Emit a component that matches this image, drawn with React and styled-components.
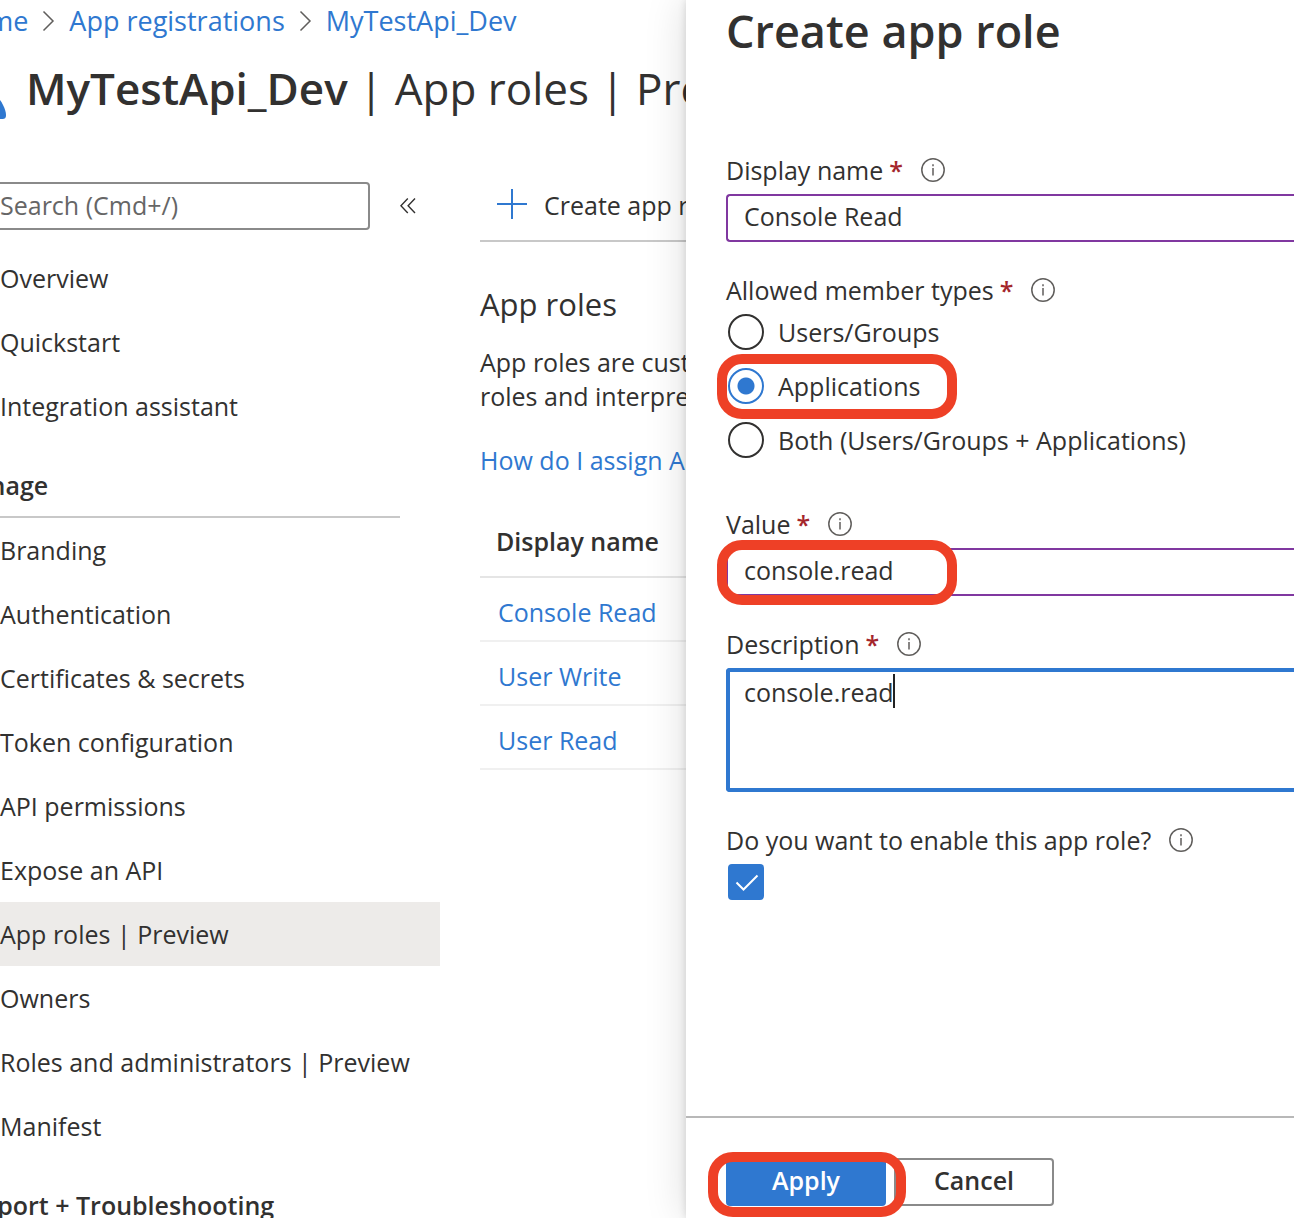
import React from "react";
import styled, { createGlobalStyle, css } from "styled-components";

const color = {
  text: "#323130",
  blue: "#2f78d0",
  purple: "#8038a0",
  red: "#ee4026",
  required: "#a4262c",
  line: "#c8c8c8",
  border: "#8a8a8a",
};

const GlobalStyle = createGlobalStyle`
  *, *::before, *::after { box-sizing: border-box; }
  body {
    margin: 0;
    background: #fff;
    color: ${color.text};
    font-family: "Open Sans", "Noto Sans", sans-serif;
    font-size: 25px;
    line-height: 34px;
  }
  input, textarea, button { font: inherit; color: inherit; }
  h1, h2, h3, p, ul { margin: 0; padding: 0; }
  ul { list-style: none; }
`;

const Shell = styled.div`
  display: grid;
  grid-template-columns: minmax(0, 1fr) 608px;
  height: 100vh;
  overflow: hidden;
`;

const Portal = styled.div`
  min-width: 0;
  overflow: hidden;
  white-space: nowrap;
`;

/* The portal is scrolled sideways by the width of its icon gutter. */
const Scrolled = styled.div`
  margin-left: -48px;
`;

const Link = styled.a`
  color: ${color.blue};
  text-decoration: none;
`;

const Breadcrumb = styled.nav`
  display: flex;
  align-items: center;
  gap: 14px;
  height: 42px;
  font-size: 27px;
  svg { flex: none; }
`;

const TitleBar = styled.header`
  display: flex;
  align-items: center;
  gap: 18px;
  height: 92px;
  margin-bottom: 36px;
  svg { flex: none; }
`;

const PageTitle = styled.h1`
  font-size: 44px;
  line-height: 64px;
  font-weight: 400;
  strong { font-weight: 600; }
`;

const Columns = styled.div`
  display: flex;
`;

const Sidebar = styled.nav`
  flex: 0 0 488px;
`;

const SearchRow = styled.div`
  display: flex;
  align-items: center;
  gap: 18px;
  padding: 12px 12px 16px 16px;
`;

const SearchBox = styled.input`
  flex: 1;
  min-width: 0;
  height: 48px;
  padding: 0 16px 2px 30px;
  border: 2px solid ${color.border};
  border-radius: 4px;
  background: #fff;
  &::placeholder { color: #666; opacity: 1; }
`;

const IconButton = styled.button`
  display: flex;
  align-items: center;
  justify-content: center;
  width: 40px;
  height: 40px;
  padding: 0;
  border: 0;
  background: none;
`;

const NavItem = styled.a`
  display: block;
  padding: 15px 0 15px 48px;
  color: inherit;
  text-decoration: none;
  background: ${(p) => (p.$selected ? "#edebe9" : "transparent")};
`;

const NavHeading = styled.h3`
  margin-right: 40px;
  padding: 30px 0 14px;
  border-bottom: 2px solid ${color.line};
  font-size: 25px;
  font-weight: 600;
`;

const Main = styled.main`
  flex: 1;
  min-width: 0;
  margin-left: 40px;
`;

const Toolbar = styled.div`
  display: flex;
  height: 72px;
  border-bottom: 2px solid ${color.line};
`;

const ToolbarButton = styled.button`
  display: flex;
  align-items: center;
  gap: 16px;
  padding: 0 16px;
  border: 0;
  background: none;
  white-space: nowrap;
`;

const SectionTitle = styled.h2`
  margin: 42px 0 21px;
  font-size: 31px;
  line-height: 40px;
  font-weight: 400;
`;

const HelpLine = styled.p`
  margin: 30px 0 29px;
`;

const RoleTable = styled.table`
  width: 100%;
  border-spacing: 0;
  text-align: left;
`;

const HeadCell = styled.th`
  height: 72px;
  padding: 0 16px;
  border-bottom: 2px solid #e5e5e5;
  font-weight: 600;
`;

const Cell = styled.td`
  height: 64px;
  padding: 6px 18px 0;
  border-bottom: 2px solid #f0f0f0;
`;

const Panel = styled.form`
  position: relative;
  z-index: 1;
  display: flex;
  flex-direction: column;
  background: #fff;
  box-shadow: 0 0 8px rgba(0, 0, 0, 0.14), 0 0 40px rgba(0, 0, 0, 0.14);
`;

const PanelTitle = styled.h2`
  padding-left: 40px;
  font-size: 45px;
  line-height: 62px;
  font-weight: 600;
`;

const PanelBody = styled.div`
  flex: 1;
  display: flex;
  flex-direction: column;
  gap: 24px;
  padding: 84px 0 0 40px;
`;

const FieldBox = styled.div`
  position: relative;
`;

const Group = styled.fieldset`
  min-width: 0;
  margin: 0;
  padding: 0 0 18px;
  border: 0;
`;

const LabelRow = styled.div`
  display: flex;
  align-items: center;
  gap: 18px;
  height: 48px;
`;

const Required = styled.span`
  margin-left: 6px;
  color: ${color.required};
  font-weight: 600;
`;

const Control = styled.div`
  position: relative;
`;

const fieldStyle = css`
  display: block;
  width: 100%;
  margin: 0;
  border-style: solid;
  border-right: 0;
  border-radius: 4px 0 0 4px;
  background: #fff;
  outline: 0;
`;

const TextInput = styled.input`
  ${fieldStyle}
  height: 48px;
  padding: 0 16px 4px;
  border-width: 2px 0 2px 2px;
  border-color: ${color.purple};
`;

const TextArea = styled.textarea`
  ${fieldStyle}
  height: 124px;
  padding: 3px 14px;
  border-width: 4px 0 4px 4px;
  border-color: ${color.blue};
  resize: none;
`;

const Caret = styled.span`
  position: absolute;
  top: 6px;
  left: 167px;
  width: 2px;
  height: 34px;
  background: #222;
`;

const RadioList = styled.div`
  display: flex;
  flex-direction: column;
  align-items: flex-start;
  gap: 18px;
  padding-left: 2px;
`;

const RadioRow = styled.label`
  position: relative;
  display: flex;
  align-items: center;
  gap: 14px;
  height: 36px;
`;

const Radio = styled.input`
  appearance: none;
  width: 36px;
  height: 36px;
  margin: 0;
  border: 2px solid ${color.text};
  border-radius: 50%;
  background: #fff;
  &:checked {
    border-color: ${color.blue};
    background: radial-gradient(circle, ${color.blue} 8px, #fff 9px);
  }
`;

const CheckWrap = styled.div`
  display: grid;
  width: 36px;
  margin-left: 2px;
  > * { grid-area: 1 / 1; }
  svg { pointer-events: none; }
`;

const Checkbox = styled.input`
  appearance: none;
  width: 36px;
  height: 36px;
  margin: 0;
  border: 2px solid ${color.blue};
  border-radius: 4px;
  &:checked { background: ${color.blue}; }
`;

const PanelFooter = styled.footer`
  display: flex;
  gap: 8px;
  padding: 40px 40px 12px;
  border-top: 2px solid #b8b8b8;
`;

const Button = styled.button`
  min-width: 160px;
  height: 48px;
  padding: 0 0 4px;
  border: 2px solid ${(p) => (p.$primary ? color.blue : color.border)};
  border-radius: 4px;
  background: ${(p) => (p.$primary ? color.blue : "#fff")};
  color: ${(p) => (p.$primary ? "#fff" : "inherit")};
  font-weight: 600;
`;

/* Marker ring laid over a control. */
const Ring = styled.span`
  position: absolute;
  top: ${(p) => p.$top}px;
  left: ${(p) => p.$left}px;
  width: ${(p) => p.$width}px;
  height: 65px;
  border: 10px solid ${color.red};
  border-radius: 25px;
  pointer-events: none;
`;

const Chevron = () => (
  <svg width="13" height="22" viewBox="0 0 13 22" fill="none" stroke="#605e5c" strokeWidth="1.5" aria-hidden="true">
    <path d="M1.5 1.5 11 11 1.5 20.5" />
  </svg>
);

const InfoIcon = () => (
  <svg width="24" height="24" viewBox="0 0 24 24" fill="none" stroke="#605e5c" strokeWidth="1.5" role="img" aria-label="Info">
    <circle cx="12" cy="12" r="11.2" />
    <path d="M12 10v7.5M12 6.2v2" />
  </svg>
);

const PersonIcon = () => (
  <svg width="56" height="64" viewBox="0 0 56 64" fill={color.blue} aria-hidden="true">
    <circle cx="28" cy="16" r="15" />
    <path d="M2 63C0 63-1 61 0 58 4 42 14 35 28 35c10 0 19 5 23 14 2 4 3 7 3 10s-1 4-4 4Z" />
  </svg>
);

const PlusIcon = () => (
  <svg width="32" height="32" viewBox="0 0 32 32" fill="none" stroke={color.blue} strokeWidth="2" aria-hidden="true">
    <path d="M1 15h30M16 0v30" />
  </svg>
);

const CollapseIcon = () => (
  <svg width="16" height="18" viewBox="0 0 16 18" fill="none" stroke={color.text} strokeWidth="1.4" aria-hidden="true">
    <path d="M7.8 1.5.9 8.8l6.9 7.3M15 1.5 8.1 8.8l6.9 7.3" />
  </svg>
);

const CheckIcon = () => (
  <svg width="36" height="36" viewBox="0 0 36 36" fill="none" stroke="#fff" strokeWidth="2" aria-hidden="true">
    <path d="M8.5 18.5 15.5 25.5 29.5 11.5" />
  </svg>
);

const overview = ["Overview", "Quickstart", "Integration assistant"];
const manage = [
  "Branding",
  "Authentication",
  "Certificates & secrets",
  "Token configuration",
  "API permissions",
  "Expose an API",
  "App roles | Preview",
  "Owners",
  "Roles and administrators | Preview",
  "Manifest",
];
const roles = ["Console Read", "User Write", "User Read"];

function NavList({ items, selected }) {
  return (
    <ul>
      {items.map((item) => (
        <li key={item}>
          <NavItem href="#" $selected={item === selected}>{item}</NavItem>
        </li>
      ))}
    </ul>
  );
}

function Field({ id, label, required, children }) {
  return (
    <FieldBox>
      <LabelRow>
        <label htmlFor={id}>
          {label}
          {required && <Required>*</Required>}
        </label>
        <InfoIcon />
      </LabelRow>
      {children}
    </FieldBox>
  );
}

export default function App() {
  return (
    <>
      <GlobalStyle />
      <Shell>
        <Portal>
          <Scrolled>
            <Breadcrumb aria-label="Breadcrumb">
              <Link href="#">Home</Link>
              <Chevron />
              <Link href="#">App registrations</Link>
              <Chevron />
              <Link href="#">MyTestApi_Dev</Link>
            </Breadcrumb>
            <TitleBar>
              <PersonIcon />
              <PageTitle>
                <strong>MyTestApi_Dev</strong> | App roles | Preview
              </PageTitle>
            </TitleBar>
            <Columns>
              <Sidebar aria-label="Resource menu">
                <SearchRow>
                  <SearchBox type="search" aria-label="Search" placeholder="Search (Cmd+/)" />
                  <IconButton type="button" aria-label="Collapse menu">
                    <CollapseIcon />
                  </IconButton>
                </SearchRow>
                <NavList items={overview} />
                <NavHeading>Manage</NavHeading>
                <NavList items={manage} selected="App roles | Preview" />
                <NavHeading>Support + Troubleshooting</NavHeading>
              </Sidebar>
              <Main>
                <Toolbar>
                  <ToolbarButton type="button">
                    <PlusIcon />
                    Create app role
                  </ToolbarButton>
                </Toolbar>
                <SectionTitle>App roles</SectionTitle>
                <p>
                  App roles are custom
                  <br />
                  roles and interprets
                </p>
                <HelpLine>
                  <Link href="#">How do I assign App roles</Link>
                </HelpLine>
                <RoleTable>
                  <thead>
                    <tr>
                      <HeadCell scope="col">Display name</HeadCell>
                    </tr>
                  </thead>
                  <tbody>
                    {roles.map((role) => (
                      <tr key={role}>
                        <Cell>
                          <Link href="#">{role}</Link>
                        </Cell>
                      </tr>
                    ))}
                  </tbody>
                </RoleTable>
              </Main>
            </Columns>
          </Scrolled>
        </Portal>

        <Panel aria-labelledby="panel-title" onSubmit={(e) => e.preventDefault()}>
          <PanelTitle id="panel-title">Create app role</PanelTitle>
          <PanelBody>
            <Field id="display-name" label="Display name" required>
              <TextInput id="display-name" type="text" defaultValue="Console Read" />
            </Field>
            <Group aria-labelledby="member-types">
              <LabelRow>
                <span id="member-types">
                  Allowed member types<Required>*</Required>
                </span>
                <InfoIcon />
              </LabelRow>
              <RadioList>
                <RadioRow>
                  <Radio type="radio" name="member" />
                  Users/Groups
                </RadioRow>
                <RadioRow>
                  <Radio type="radio" name="member" defaultChecked />
                  Applications
                  <Ring $top={-14} $left={-11} $width={240} />
                </RadioRow>
                <RadioRow>
                  <Radio type="radio" name="member" />
                  Both (Users/Groups + Applications)
                </RadioRow>
              </RadioList>
            </Group>
            <Field id="value" label="Value" required>
              <Control>
                <TextInput id="value" type="text" defaultValue="console.read" />
                <Ring $top={-8} $left={-9} $width={240} />
              </Control>
            </Field>
            <Field id="description" label="Description" required>
              <Control>
                <TextArea id="description" defaultValue="console.read" />
                <Caret />
              </Control>
            </Field>
            <Field id="enabled" label="Do you want to enable this app role?">
              <CheckWrap>
                <Checkbox id="enabled" type="checkbox" defaultChecked />
                <CheckIcon />
              </CheckWrap>
            </Field>
          </PanelBody>
          <PanelFooter>
            <Control>
              <Button type="submit" $primary>Apply</Button>
              <Ring $top={-6} $left={-18} $width={198} />
            </Control>
            <Button type="button">Cancel</Button>
          </PanelFooter>
        </Panel>
      </Shell>
    </>
  );
}
